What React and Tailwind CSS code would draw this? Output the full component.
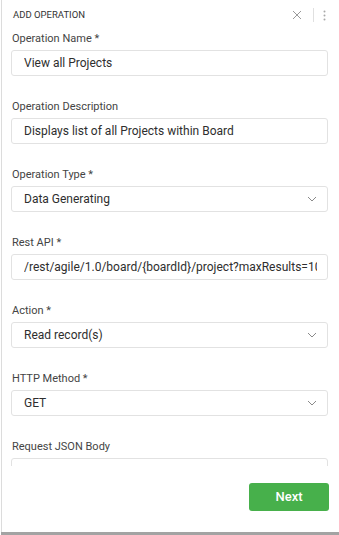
import React from "react";

// Panel lateral "Add operation": campos del formulario y pie con botón

const campos = [
  { etiqueta: "Operation Name *", valor: "View all Projects" },
  { etiqueta: "Operation Description", valor: "Displays list of all Projects within Board" },
  { etiqueta: "Operation Type *", valor: "Data Generating", select: true },
  { etiqueta: "Rest API *", valor: "/rest/agile/1.0/board/{boardId}/project?maxResults=1000" },
  { etiqueta: "Action *", valor: "Read record(s)", select: true },
  { etiqueta: "HTTP Method *", valor: "GET", select: true },
  { etiqueta: "Request JSON Body", valor: "" },
];

function Flecha() {
  return (
    <svg width="10" height="6" viewBox="0 0 10 6" className="shrink-0">
      <path d="M1 1l4 4 4-4" fill="none" stroke="#8a8a8a" strokeWidth="1" />
    </svg>
  );
}

function Campo({ etiqueta, valor, select }) {
  return (
    <div className="mb-[24px] flex flex-col">
      <label className="mb-[5px] h-[13px] pl-[1px] text-[11px] leading-[13px] text-[#444]">{etiqueta}</label>
      <div className="flex h-[26px] items-center overflow-hidden rounded-[3px] border border-[#e2e2e2] bg-white pl-[12px] pr-[10px]">
        <span className="flex-1 overflow-hidden whitespace-nowrap text-[12px] text-[#2e2e2e]">{valor}</span>
        {select && <Flecha />}
      </div>
    </div>
  );
}

export default function App() {
  return (
    <div
      className="flex h-[535px] w-[339px] flex-col bg-white"
      style={{ fontFamily: "Roboto, 'Liberation Sans', sans-serif" }}
    >
      <div className="ml-[1px] flex flex-1 flex-col overflow-hidden border-l border-[#dcdcdc]">
        {/* Cabecera */}
        <div className="flex h-[30px] shrink-0 items-center pl-[11px] pr-[13px]">
          <span className="flex-1 text-[9.5px] text-[#333]">ADD OPERATION</span>
          <svg width="10" height="10" viewBox="0 0 10 10">
            <path d="M1 1l8 8M9 1l-8 8" stroke="#9a9a9a" strokeWidth="1" />
          </svg>
          <div className="ml-[11px] mr-[9px] h-[14px] w-px bg-[#e0e0e0]" />
          <svg width="3" height="11" viewBox="0 0 3 11">
            <circle cx="1.5" cy="1.5" r="1" fill="#a8a8a8" />
            <circle cx="1.5" cy="5.5" r="1" fill="#a8a8a8" />
            <circle cx="1.5" cy="9.5" r="1" fill="#a8a8a8" />
          </svg>
        </div>

        <div className="h-[436px] shrink-0 overflow-hidden pl-[9px] pr-[11px] pt-[2px]">
          {campos.map((c) => (
            <Campo key={c.etiqueta} {...c} />
          ))}
        </div>

        {/* Pie */}
        <div className="flex flex-1 items-start justify-end pr-[10px] pt-[17px]">
          <button className="h-[28px] w-[80px] rounded-[3px] bg-[#47b04b] text-[13px] font-medium text-white">
            Next
          </button>
        </div>
      </div>
      <div className="ml-[1px] h-[3px] shrink-0 bg-[#a3a3a3]" />
    </div>
  );
}
